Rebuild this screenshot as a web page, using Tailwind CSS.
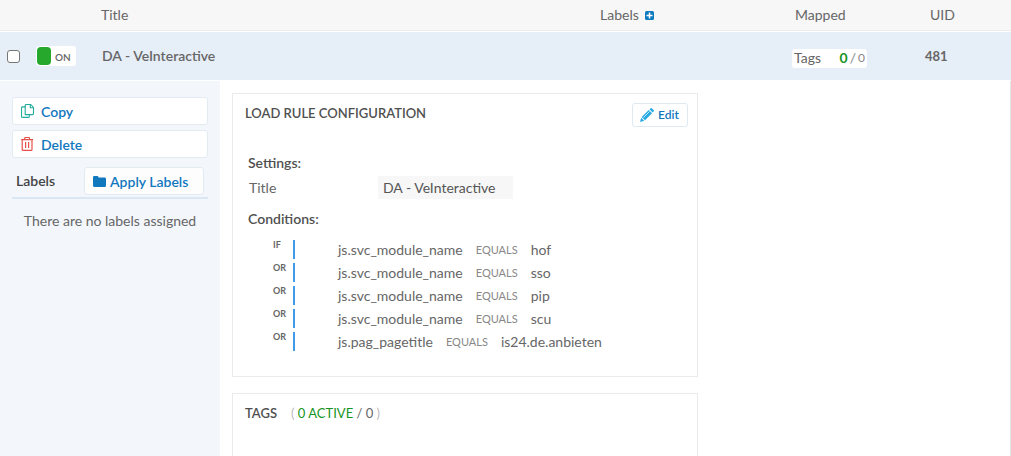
<!DOCTYPE html>
<html lang="en">
<head>
<meta charset="utf-8">
<meta name="viewport" content="width=device-width, initial-scale=1">
<title>Load Rules</title>
<script src="https://cdn.jsdelivr.net/npm/@tailwindcss/browser@4"></script>
</head>
<body class="flex min-h-screen flex-col bg-white font-['Lato',sans-serif] text-sm leading-5 text-[#666]">
  <table class="w-full table-fixed border-separate border-spacing-0 text-left">
    <colgroup>
      <col class="w-[101px]">
      <col>
      <col class="w-48">
      <col class="w-[133px]">
      <col class="w-[86px]">
    </colgroup>
    <thead>
      <tr class="h-[31px] bg-[#f7f7f7]">
        <td class="border-b border-[#ebebeb] p-0"></td>
        <th class="border-b border-[#ebebeb] p-0 font-normal">Title</th>
        <th class="border-b border-[#ebebeb] p-0 font-normal">
          <div class="flex items-center gap-1.5">Labels
            <button type="button" aria-label="Add labels column">
              <svg class="size-[9px]" viewBox="0 0 9 9"><rect width="9" height="9" rx="1.5" fill="#0e7ac0"/><path d="M4.500 1.500v6M1.500 4.500h6" stroke="#fff" stroke-width="1.500"/></svg>
            </button>
          </div>
        </th>
        <th class="border-b border-[#ebebeb] p-0 pl-[3px] font-normal">Mapped</th>
        <th class="border-b border-[#ebebeb] p-0 pl-[5px] font-normal">UID</th>
      </tr>
    </thead>
    <tbody>
      <tr class="h-[49px] bg-[#e6eef8]">
        <td class="border-t border-white p-0">
          <div class="flex items-center gap-4 pl-[7px]">
            <input type="checkbox" aria-label="Select DA - VeInteractive" class="size-[13px] appearance-none rounded-[3px] border border-[#767676] bg-white">
            <button type="button" role="switch" aria-checked="true" class="flex h-5 w-10 items-center gap-1 rounded-[3px] bg-white pl-px text-[10px] font-semibold">
              <span class="h-[18px] w-[14px] rounded-[4px] bg-[#25a82c]"></span>
              <span class="pt-0.5">ON</span>
            </button>
          </div>
        </td>
        <td class="border-t border-white p-0 pl-px font-semibold">DA - VeInteractive</td>
        <td class="border-t border-white p-0"></td>
        <td class="border-t border-white p-0 pt-1">
          <div class="flex h-[19px] w-[75px] items-center justify-between rounded-[3px] bg-white px-0.5">
            <span>Tags</span>
            <span class="flex gap-0.5"><b class="text-[#189424]">0</b><span class="text-[#888]">/</span><span class="text-xs leading-5 text-[#888]">0</span></span>
          </div>
        </td>
        <td class="border-t border-white p-0 text-[13px] font-bold">481</td>
      </tr>
    </tbody>
  </table>

  <div class="mt-px flex grow">
    <aside class="w-[220px] shrink-0 bg-[#f3f7fc] px-3 pt-4">
      <div class="flex flex-col gap-[5px] font-semibold text-[#1278be]">
        <button type="button" class="flex h-7 items-center gap-1.5 rounded-[3px] border border-[#e3ebf2] bg-white pl-2">
          <svg class="size-[14px]" viewBox="0 0 14 14" fill="none" stroke="#23ab9c" stroke-width="1.100" stroke-linejoin="round"><path d="M4.200 10.600V1.500q0-1 1-1h4.600l2.700 3v6.100q0 1-1 1z"/><path d="M9.300.6v3.200h3.200M4.200 2.900H1.500q-1 0-1 1v8.500q0 1 1 1h5.800q1 0 1-1v-1.700"/></svg>
          <span class="pt-px">Copy</span>
        </button>
        <button type="button" class="flex h-7 items-center gap-1.5 rounded-[3px] border border-[#e3ebf2] bg-white pl-2">
          <svg class="size-[14px]" viewBox="0 0 14 14" fill="none" stroke="#e8514a" stroke-width="1.200" stroke-linejoin="round"><path d="M.2 2.600h11.800M3.700 2.600V1.500q0-1 1-1h2.800q1 0 1 1v1.100M1.200 2.600v9.800q0 1 1 1h7.800q1 0 1-1V2.600M4.600 5v6M7.600 5v6"/></svg>
          <span class="pt-px">Delete</span>
        </button>
      </div>
      <div class="mt-[9px] flex justify-between border-b-2 border-[#dbe6f3] pr-1 pb-0.5 pl-1">
        <h2 class="pt-1 font-semibold text-[#444]">Labels</h2>
        <button type="button" class="flex h-7 w-[120px] items-center gap-1 rounded-[3px] border border-[#e3ebf2] bg-[#fdfdfe] pl-2 font-semibold text-[#1278be]">
          <svg class="h-[11px] w-[13px] shrink-0" viewBox="0 0 13 11" fill="#1278be"><path d="M0 1.300Q0 0 1.300 0h3q1.200 0 1.200 1.400h6q1.500 0 1.500 1.400v6.600Q13 11 11.600 11H1.400Q0 11 0 9.500z"/></svg>
          <span class="pt-0.5">Apply Labels</span>
        </button>
      </div>
      <p class="mt-3 text-center">There are no labels assigned</p>
    </aside>

    <main class="flex grow flex-col gap-4 border-r border-[#e5e5e5] pt-3 pr-3 pl-3">
      <section class="w-full max-w-[466px] border border-[#ebebeb] px-3 pt-[9px] pb-[25px]">
        <div class="-mr-[3px] flex justify-between">
          <h2 class="text-[13px] font-semibold text-[#505050]">LOAD RULE CONFIGURATION</h2>
          <button type="button" class="flex h-6 w-14 items-center gap-1 rounded-[3px] border border-[#dfe9f1] pl-[7px] text-xs font-semibold text-[#1278be]">
            <svg class="size-[14px] shrink-0" viewBox="0 0 14 14" fill="#27aae1"><path d="M0 14l1.200-4.200 3 3zM1.700 9l7-7L12 5.300l-7 7zM9.500 1.300L10.600.3q.7-.5 1.400.1l1.600 1.600q.6.7 0 1.400l-1 1.100z"/><path d="M3.500 9.500l6-6" stroke="#fff" stroke-width=".7"/></svg>
            Edit
          </button>
        </div>
        <div class="mt-[26px] pl-[3px]">
          <h3 class="font-semibold text-[#505050]">Settings:</h3>
          <dl class="mt-[3px] flex items-center">
            <dt class="w-[130px] pl-px">Title</dt>
            <dd class="h-[23px] w-[135px] bg-[#f7f7f7] pt-0.5 pl-[5px] text-[#555]">DA - VeInteractive</dd>
          </dl>
          <h3 class="mt-2.5 font-semibold text-[#505050]">Conditions:</h3>
          <ul class="mt-[11px] flex flex-col gap-1 pl-[25px]">
            <li class="flex h-[19px]"><span class="w-5 text-[9px] leading-[10px] font-bold">IF</span><span class="mr-[43px] w-0.5 bg-[#4299e8]"></span><div class="flex items-center gap-[13px] leading-[18px]"><span>js.svc_module_name</span><span class="text-[11px] text-[#888]">EQUALS</span><span>hof</span></div></li>
            <li class="flex h-[19px]"><span class="w-5 text-[9px] leading-[10px] font-bold">OR</span><span class="mr-[43px] w-0.5 bg-[#4299e8]"></span><div class="flex items-center gap-[13px] leading-[18px]"><span>js.svc_module_name</span><span class="text-[11px] text-[#888]">EQUALS</span><span>sso</span></div></li>
            <li class="flex h-[19px]"><span class="w-5 text-[9px] leading-[10px] font-bold">OR</span><span class="mr-[43px] w-0.5 bg-[#4299e8]"></span><div class="flex items-center gap-[13px] leading-[18px]"><span>js.svc_module_name</span><span class="text-[11px] text-[#888]">EQUALS</span><span>pip</span></div></li>
            <li class="flex h-[19px]"><span class="w-5 text-[9px] leading-[10px] font-bold">OR</span><span class="mr-[43px] w-0.5 bg-[#4299e8]"></span><div class="flex items-center gap-[13px] leading-[18px]"><span>js.svc_module_name</span><span class="text-[11px] text-[#888]">EQUALS</span><span>scu</span></div></li>
            <li class="flex h-[19px]"><span class="w-5 text-[9px] leading-[10px] font-bold">OR</span><span class="mr-[43px] w-0.5 bg-[#4299e8]"></span><div class="flex items-center gap-[13px] leading-[18px]"><span>js.pag_pagetitle</span><span class="text-[11px] text-[#888]">EQUALS</span><span>is24.de.anbieten</span></div></li>
          </ul>
        </div>
      </section>
      <section class="w-full max-w-[466px] grow border border-b-0 border-[#ebebeb] px-3 pt-[9px]">
        <div class="flex gap-3.5">
          <h2 class="text-[13px] font-semibold text-[#505050]">TAGS</h2>
          <p class="text-[13px] text-[#bbb]">( <span class="text-[#189424]">0 ACTIVE</span> <span class="text-[#666]">/ 0</span> )</p>
        </div>
      </section>
    </main>
  </div>
</body>
</html>
